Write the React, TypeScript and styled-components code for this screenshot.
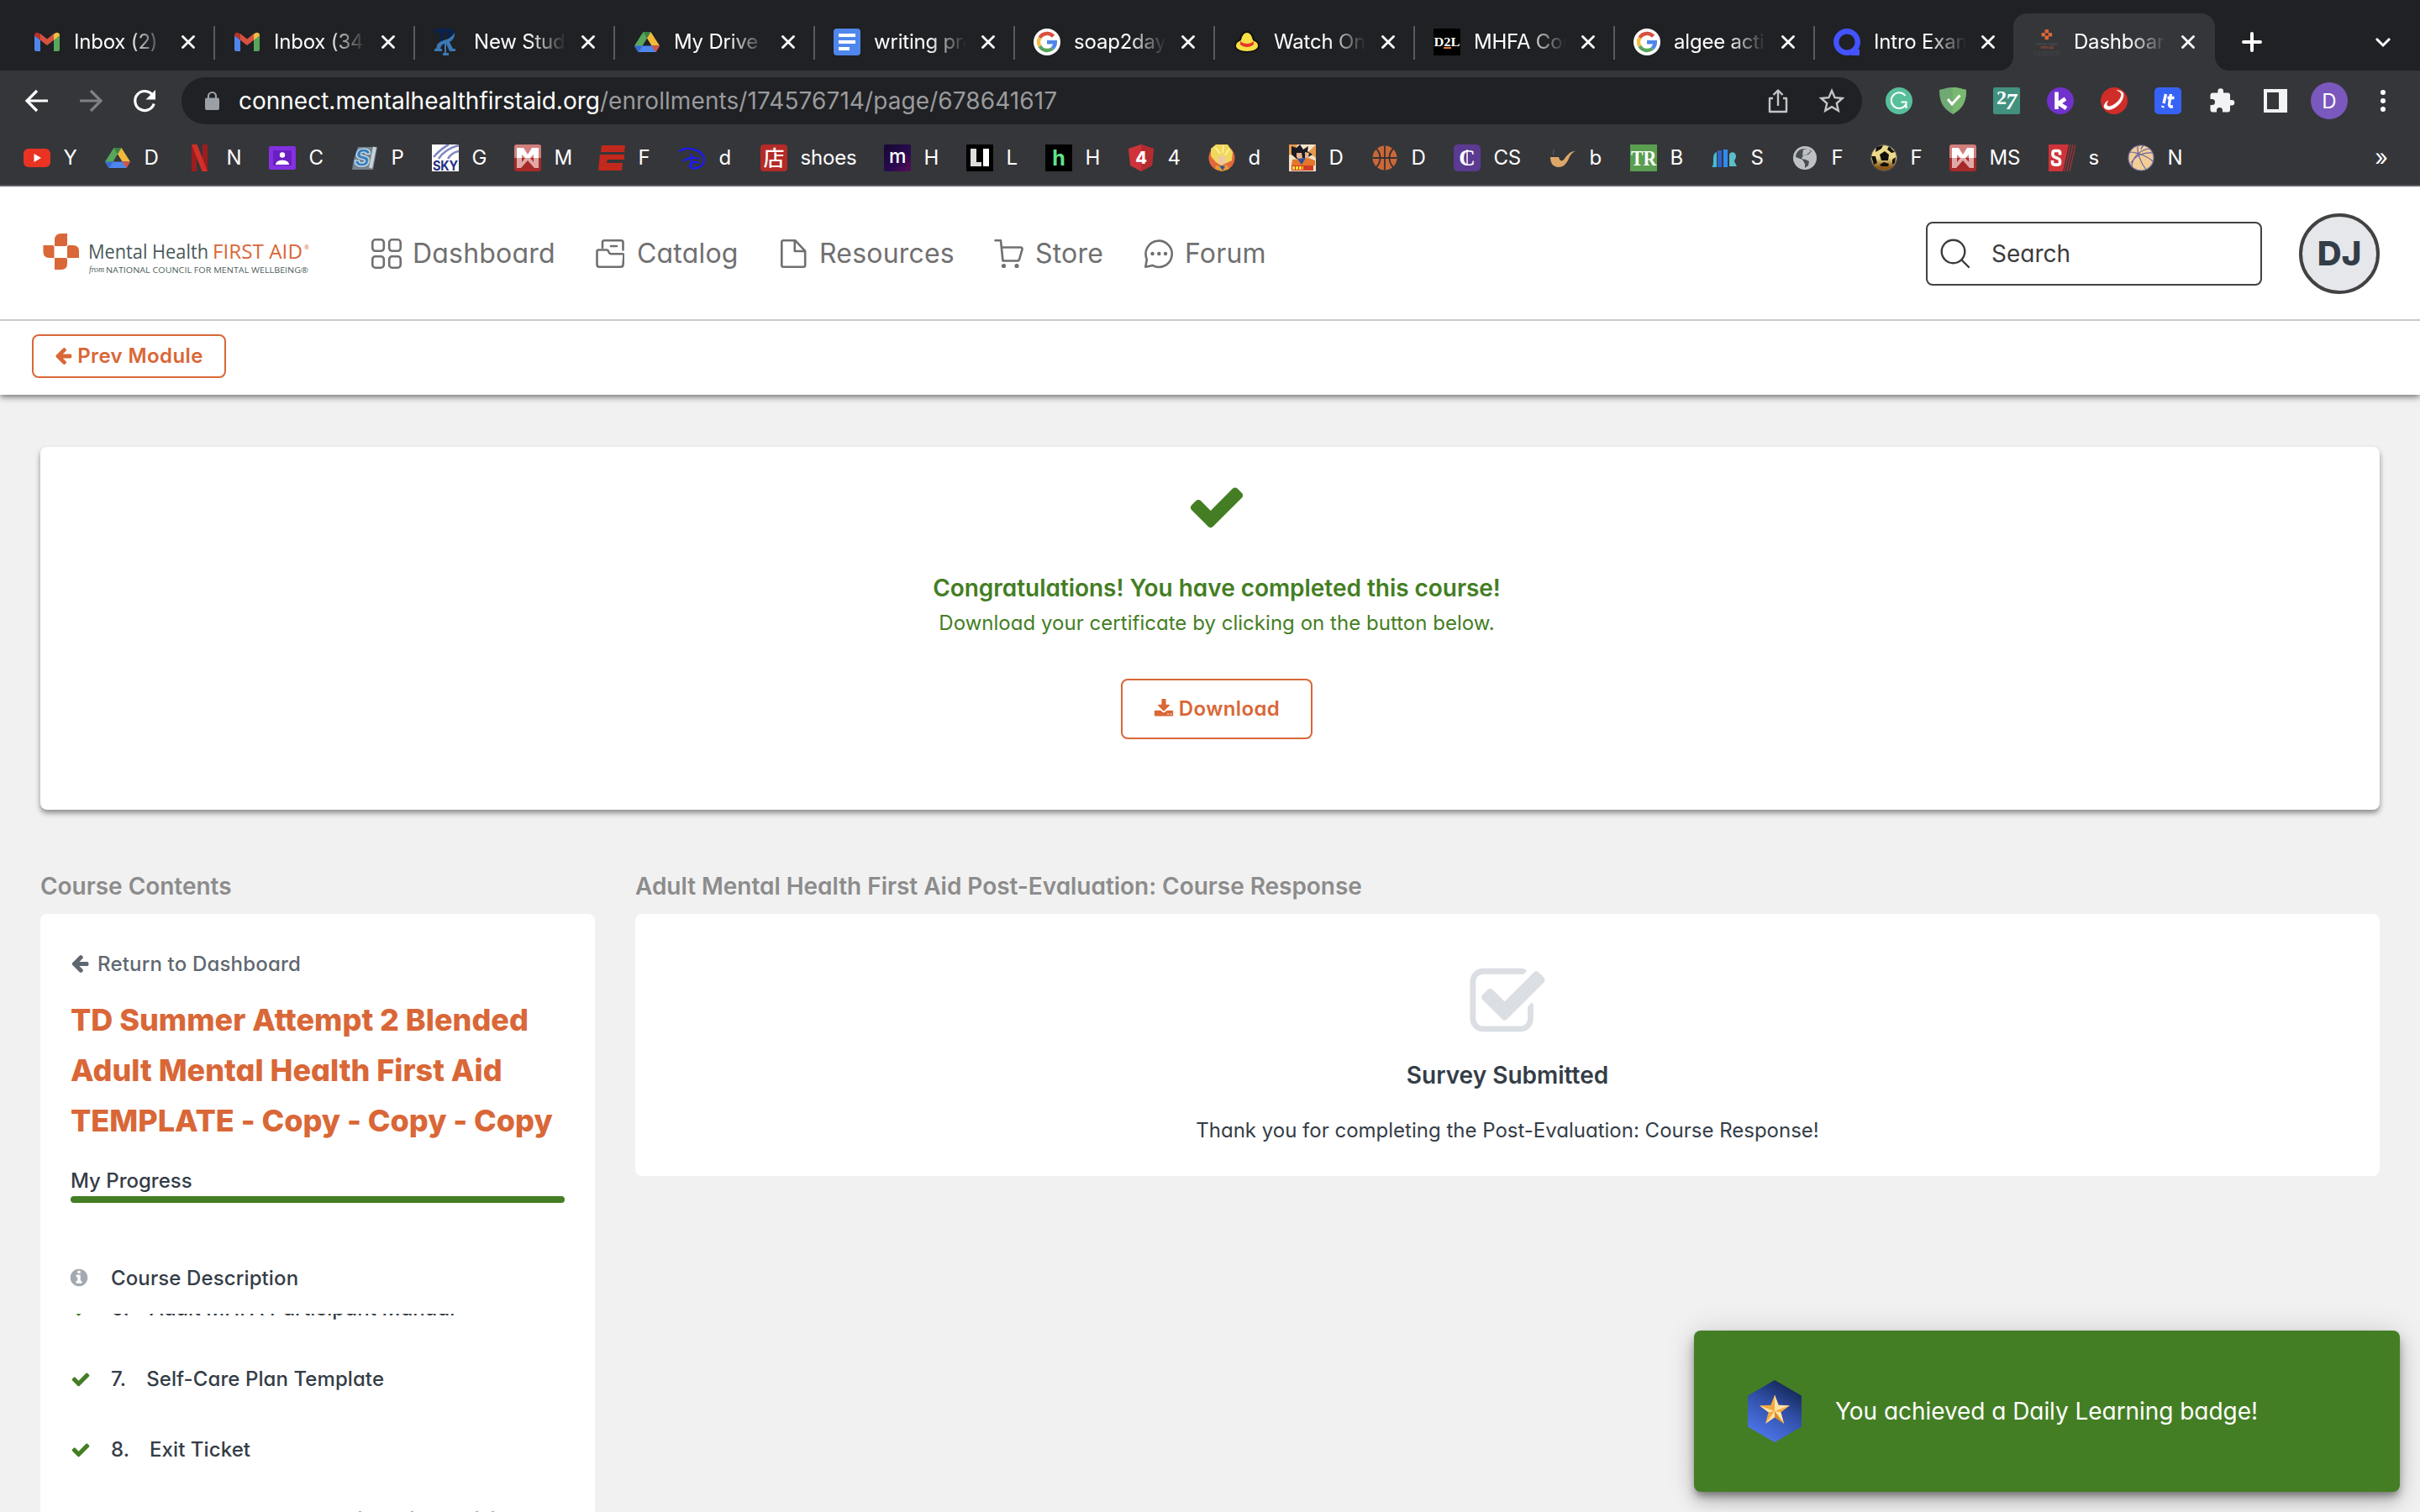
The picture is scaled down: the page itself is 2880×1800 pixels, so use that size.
import React from "react";
import styled, { createGlobalStyle, css } from "styled-components";

const ORANGE = "#d96737";
const GREEN = "#447e24";
const INK = "#343d47";

const GlobalStyle = createGlobalStyle`
  * { box-sizing: border-box; }
  html, body { margin: 0; padding: 0; }
  body {
    background: #f1f1f1;
    overflow: hidden;
    font-family: Inter, "Liberation Sans", sans-serif;
    font-feature-settings: "cv11";
  }
  svg { display: block; flex: none; }
`;

const Window = styled.div`
  position: relative;
  width: 2880px;
  height: 1800px;
  overflow: hidden;
  display: flex;
  flex-direction: column;
`;

/* ---------- browser chrome ---------- */

const Chrome = styled.div`
  flex: none;
  height: 222px;
  background: #35363a;
  border-bottom: 2px solid #5f5f65;
  color: #fff;
  font-feature-settings: normal;
`;

const TabStrip = styled.div`
  height: 84px;
  padding: 16px 0 0 18px;
  background: #202124;
  display: flex;
`;

const TabItem = styled.div<{ $active?: boolean; $line?: boolean }>`
  position: relative;
  width: 238px;
  height: 68px;
  padding-left: 22px;
  display: flex;
  align-items: center;
  flex: none;
  ${(p) =>
    p.$line &&
    css`
      &::after {
        content: "";
        position: absolute;
        right: 0;
        top: 15px;
        width: 2px;
        height: 40px;
        background: #5a5b5f;
      }
    `}
  ${(p) =>
    p.$active &&
    css`
      width: 240px;
      margin-left: -2px;
      padding-left: 24px;
      background: #35363a;
      border-radius: 16px 16px 0 0;
      &::before,
      &::after {
        content: "";
        position: absolute;
        bottom: 0;
        width: 16px;
        height: 16px;
      }
      &::before {
        left: -16px;
        background: radial-gradient(circle at 0 0, #202124 15.5px, #35363a 16px);
      }
      &::after {
        right: -16px;
        background: radial-gradient(circle at 100% 0, #202124 15.5px, #35363a 16px);
      }
    `}
`;

const TabTitle = styled.span`
  width: 112px;
  margin-left: 16px;
  font-size: 24px;
  line-height: 34px;
  letter-spacing: -0.2px;
  white-space: nowrap;
  overflow: hidden;
  color: #fff;
  mask-image: linear-gradient(90deg, #000 58%, transparent 98%);
`;

const TabClose = styled.svg`
  margin-left: 16px;
`;

const StripTools = styled.div`
  flex: 1;
  display: flex;
  align-items: center;
  justify-content: space-between;
  padding: 0 32px 0 32px;
`;

const Toolbar = styled.div`
  height: 72px;
  display: flex;
  align-items: center;
  padding: 0 28px;
`;

const NavButtons = styled.div`
  display: flex;
  gap: 32px;
  width: 188px;
`;

const Omnibox = styled.div`
  width: 2000px;
  height: 56px;
  border-radius: 28px;
  background: #202124;
  display: flex;
  align-items: center;
  padding: 0 20px 0 28px;
`;

const Url = styled.div`
  flex: 1;
  margin-left: 23px;
  font-size: 28px;
  letter-spacing: 0.08px;
  color: #9a9b9e;
  white-space: nowrap;
  b {
    font-weight: 400;
    letter-spacing: 0;
    color: #fff;
  }
`;

const OmniActions = styled.div`
  display: flex;
  gap: 32px;
`;

const Extensions = styled.div`
  display: flex;
  align-items: center;
  gap: 32px;
  margin-left: 28px;
`;

const ProfileDot = styled.div`
  width: 44px;
  height: 44px;
  margin: 0 -6px;
  border-radius: 50%;
  background: #7a58bd;
  display: grid;
  place-items: center;
  font-size: 24px;
`;

const BookmarkBar = styled.div`
  height: 64px;
  padding: 0 38px 0 28px;
  display: flex;
  align-items: center;
`;

const Bookmark = styled.div<{ $w: number }>`
  width: ${(p) => p.$w}px;
  display: flex;
  align-items: center;
  gap: 15.5px;
  font-size: 24px;
  line-height: 32px;
  letter-spacing: -0.2px;
  flex: none;
`;

const Overflow = styled.span`
  margin-left: auto;
  font-size: 27px;
  line-height: 32px;
`;

/* ---------- site header ---------- */

const SiteHeader = styled.header`
  flex: none;
  height: 160px;
  background: #fff;
  border-bottom: 2px solid #cacaca;
  display: flex;
  align-items: center;
  padding: 2px 48px 0 50px;
`;

const SiteNav = styled.nav`
  margin-left: 70px;
  flex: 1;
  display: flex;
  align-items: center;
`;

const NavLink = styled.a<{ $w: number; $gap: number }>`
  width: ${(p) => p.$w}px;
  display: flex;
  align-items: center;
  gap: ${(p) => p.$gap}px;
  font-size: 32px;
  line-height: 40px;
  letter-spacing: 0.2px;
  color: #707070;
  white-space: nowrap;
`;

const SearchBox = styled.div`
  width: 400px;
  height: 76px;
  border: 2px solid #424242;
  border-radius: 8px;
  display: flex;
  align-items: center;
  gap: 25px;
  padding-left: 15px;
  font-size: 28px;
  color: #3c3c3c;
`;

const Avatar = styled.div`
  width: 96px;
  height: 96px;
  margin-left: 44px;
  border-radius: 50%;
  border: 4px solid #424242;
  background: #e5e7eb;
  color: ${INK};
  display: grid;
  place-items: center;
  padding-bottom: 2px;
  font-size: 40px;
  font-weight: 800;
`;

const ModuleBar = styled.div`
  flex: none;
  position: relative;
  height: 88px;
  background: #fff;
  padding: 16px 38px;
  box-shadow: 0 2px 8px rgba(0, 0, 0, 0.6);
  clip-path: inset(0 0 -20px 0);
`;

const OutlineButton = styled.button<{ $w: number; $h: number }>`
  width: ${(p) => p.$w}px;
  height: ${(p) => p.$h}px;
  padding: 0;
  border: 2px solid ${ORANGE};
  border-radius: 8px;
  background: #fff;
  color: ${ORANGE};
  display: flex;
  align-items: center;
  justify-content: center;
  gap: 6px;
  font: 600 24px/30px Inter, "Liberation Sans", sans-serif;
  letter-spacing: 0.4px;
  font-feature-settings: "cv11";
`;

/* ---------- page body ---------- */

const Page = styled.main`
  padding: 62px 48px 0;
`;

const CongratsCard = styled.section`
  height: 432px;
  background: #fff;
  border-radius: 8px;
  box-shadow: 0 4px 6px rgba(0, 0, 0, 0.42);
  padding: 35px 0 0 16px;
  display: flex;
  flex-direction: column;
  align-items: center;
  color: ${GREEN};
`;

const CongratsTitle = styled.h2`
  margin: 41px 0 0;
  font-size: 28px;
  line-height: 40px;
  font-weight: 600;
  letter-spacing: -0.04px;
`;

const CongratsText = styled.p`
  margin: 1px 0 45px;
  font-size: 24px;
  line-height: 42px;
  letter-spacing: 0.03px;
`;

const Columns = styled.div`
  display: grid;
  grid-template-columns: 660px 1fr;
  column-gap: 48px;
  margin-top: 71px;
`;

const ColumnTitle = styled.h3`
  margin: 0 0 13px;
  height: 40px;
  font-size: 28px;
  line-height: 40px;
  font-weight: 600;
  letter-spacing: -0.04px;
  color: #8c8c8c;
  white-space: nowrap;
`;

const Contents = styled.section`
  position: relative;
  height: 712px;
  background: #fff;
  border-radius: 8px 8px 0 0;
  padding: 40px 36px 0;
  overflow: hidden;
`;

const ReturnLink = styled.a`
  display: flex;
  align-items: center;
  gap: 10px;
  font-size: 24px;
  line-height: 40px;
  font-weight: 500;
  letter-spacing: 0.18px;
  color: #5f6871;
`;

const CourseTitle = styled.h1`
  margin: 16px 0 0;
  font-size: 36px;
  line-height: 60px;
  font-weight: 800;
  letter-spacing: -0.01px;
  color: ${ORANGE};
  white-space: nowrap;
`;

const ProgressLabel = styled.div`
  margin-top: 22px;
  font-size: 24px;
  line-height: 40px;
  font-weight: 500;
  color: ${INK};
`;

const ProgressBar = styled.div`
  height: 8px;
  margin-top: -2px;
  border-radius: 4px;
  background: ${GREEN};
`;

const Description = styled.div`
  display: flex;
  align-items: center;
  gap: 27px;
  height: 40px;
  margin: 69px 0 0 -1px;
  font-size: 24px;
  font-weight: 500;
  letter-spacing: 0.12px;
  color: ${INK};
`;

const ModuleList = styled.div`
  height: 236px;
  margin-top: 23px;
  overflow: hidden;
`;

const ModuleScroll = styled.div`
  margin-top: -48px;
`;

const ModuleRow = styled.div`
  height: 84px;
  display: flex;
  align-items: center;
  font-size: 24px;
  line-height: 30px;
  font-weight: 500;
  letter-spacing: 0.08px;
  color: ${INK};
  white-space: nowrap;
`;

const ModuleNumber = styled.span`
  margin: 0 24px;
`;

/* Ascender tips of the row that is scrolled below the fold. */
const FoldTips = styled.svg`
  position: absolute;
  left: 378px;
  bottom: 0;
`;

const SurveyCard = styled.section`
  height: 312px;
  background: #fff;
  border-radius: 8px;
  display: flex;
  flex-direction: column;
  align-items: center;
  padding-top: 58px;
  color: ${INK};
`;

const SurveyTitle = styled.h2`
  margin: 18px 0 0;
  font-size: 28px;
  line-height: 40px;
  font-weight: 600;
`;

const SurveyText = styled.p`
  margin: 26px 0 0;
  font-size: 24px;
  line-height: 40px;
`;

const Toast = styled.div`
  position: absolute;
  left: 2016px;
  top: 1584px;
  width: 840px;
  height: 192px;
  border-radius: 8px;
  background: ${GREEN};
  color: #fff;
  display: flex;
  align-items: center;
  padding-left: 64px;
  padding-bottom: 1px;
  gap: 40px;
  font-size: 28px;
  letter-spacing: -0.05px;
  box-shadow: 0 6px 10px -2px rgba(0, 0, 0, 0.4), 0 12px 20px rgba(0, 0, 0, 0.18),
    0 2px 36px rgba(0, 0, 0, 0.14);
`;

/* ---------- glyphs ---------- */

const AWESOME = {
  check:
    "M1671 566q0 40-28 68l-724 724-136 136q-28 28-68 28t-68-28l-136-136-362-362q-28-28-28-68t28-68l136-136q28-28 68-28t68 28l294 295 656-657q28-28 68-28t68 28l136 136q28 28 28 68z",
  checkSquare:
    "M1472 930v318q0 119-84.5 203.5t-203.5 84.5h-832q-119 0-203.5-84.5t-84.5-203.5v-832q0-119 84.5-203.5t203.5-84.5h832q63 0 117 25 15 7 18 23 3 17-9 29l-49 49q-10 10-23 10-3 0-9-2-23-6-45-6h-832q-66 0-113 47t-47 113v832q0 66 47 113t113 47h832q66 0 113-47t47-113v-254q0-13 9-22l64-64q10-10 23-10 6 0 12 3 20 8 20 29zm231-489l-814 814q-24 24-57 24t-57-24l-430-430q-24-24-24-57t24-57l110-110q24-24 57-24t57 24l263 263 647-647q24-24 57-24t57 24l110 110q24 24 24 57t-24 57z",
  arrowLeft:
    "M1664 896v128q0 53-32.5 90.5t-84.5 37.5h-704l293 294q38 36 38 90t-38 90l-75 76q-37 37-90 37-52 0-91-37l-651-652q-37-37-37-90 0-52 37-91l651-650q38-38 91-38 52 0 90 38l75 74q38 38 38 91t-38 91l-293 293h704q52 0 84.5 37.5t32.5 90.5z",
  download:
    "M1344 1344q0-26-19-45t-45-19-45 19-19 45 19 45 45 19 45-19 19-45zm256 0q0-26-19-45t-45-19-45 19-19 45 19 45 45 19 45-19 19-45zm128-224v320q0 40-28 68t-68 28h-1472q-40 0-68-28t-28-68v-320q0-40 28-68t68-28h465l135 136q58 56 136 56t136-56l136-136h464q40 0 68 28t28 68zm-325-569q17 41-14 70l-448 448q-18 19-45 19t-45-19l-448-448q-31-29-14-70 17-39 59-39h256v-448q0-26 19-45t45-19h256q26 0 45 19t19 45v448h256q42 0 59 39z",
  info:
    "M1152 1376v-160q0-14-9-23t-23-9h-96v-512q0-14-9-23t-23-9h-320q-14 0-23 9t-9 23v160q0 14 9 23t23 9h96v320h-96q-14 0-23 9t-9 23v160q0 14 9 23t23 9h448q14 0 23-9t9-23zm-128-896v-160q0-14-9-23t-23-9h-192q-14 0-23 9t-9 23v160q0 14 9 23t23 9h192q14 0 23-9t9-23zm640 416q0 209-103 385.5t-279.5 279.5-385.5 103-385.5-103-279.5-279.5-103-385.5 103-385.5 279.5-279.5 385.5-103 385.5 103 279.5 279.5 103 385.5z",
};

function Awesome({ name, size, box, color = "currentColor" }: { name: keyof typeof AWESOME; size: [number, number]; box: string; color?: string }) {
  return (
    <svg width={size[0]} height={size[1]} viewBox={box} fill={color}>
      <path d={AWESOME[name]} />
    </svg>
  );
}

const SmallCheck = () => <Awesome name="check" size={[24, 24]} box="0 0 1792 1792" color={GREEN} />;

function Ico({ children, size = 32 }: { children: React.ReactNode; size?: number }) {
  return (
    <svg width={size} height={size} viewBox="0 0 32 32" fill="none">
      {children}
    </svg>
  );
}

const Txt = ({ x = 16, y, s, f, w = 700, fam = "Inter, sans-serif", len, children, ...r }: any) => (
  <text x={x} y={y} fontSize={s} fill={f} fontWeight={w} fontFamily={fam} textAnchor="middle" textLength={len} lengthAdjust="spacingAndGlyphs" {...r}>
    {children}
  </text>
);

const Gmail = () => (
  <Ico>
    <path d="M1 27V8l7 5.5V27H3a2 2 0 0 1-2-2z" fill="#4f86ec" />
    <path d="M31 25a2 2 0 0 1-2 2h-5V13.5L31 8z" fill="#58a55c" />
    <path d="M8 13.8V6l8 6.5L24 6v7.8l-8 6.2z" fill="#d95140" />
    <path d="M1 8c0-3.200 3.200-4 5-2.800L8 6.500v7.300L1 8.500z" fill="#b3332a" />
    <path d="M31 8c0-3.200-3.200-4-5-2.800L24 6.500v7.300l7-5.300z" fill="#f2bd42" />
  </Ico>
);
const Drive = () => (
  <Ico>
    <path d="M11.500 4h9L10 21.500 5.500 28 1 20.500z" fill="#58a55c" />
    <path d="M11.500 4L16 11.500 20.500 4z" fill="#36843f" />
    <path d="M20.500 4L31 20.500h-9.500L16 11.500z" fill="#f2b93b" />
    <path d="M10.500 20.500H31L26.500 28h-21z" fill="#4f86ec" />
    <path d="M21.500 20.500H31L26.500 28z" fill="#d95140" />
    <path d="M10.500 20.500H1L5.500 28z" fill="#3569d6" />
  </Ico>
);
const Docs = () => (
  <Ico>
    <rect width="32" height="32" rx="4" fill="#4f86ec" />
    <path d="M6 8h20M6 16h20M6 24h13" stroke="#fff" strokeWidth="4" />
  </Ico>
);
const Google = () => (
  <Ico>
    <circle cx="16" cy="16" r="16" fill="#fff" />
    <g fill="none" strokeWidth="4.400">
      <path d="M23.500 9.200A10 10 0 0 0 7.400 11" stroke="#d95140" />
      <path d="M7.400 11a10 10 0 0 0 0 10" stroke="#f2bd42" />
      <path d="M7.400 21a10 10 0 0 0 15.200 2.600" stroke="#58a55c" />
      <path d="M22.600 23.600A10 10 0 0 0 25.800 16.200H16" stroke="#4f86ec" />
    </g>
  </Ico>
);
const Rams = () => (
  <Ico>
    <path d="M1 0h19q5 1 5 6-1 5-6 7h-3V5h-4v14H7V5H1z" fill="#0b2149" />
    <path d="M25 5q1 7-6 11l4 8h3v3h-7l-4-9v11h3v3h-7v-3h2V18q-4 1-5 6h2v3H1v-3h2q1-8 9-10 9-2 13-9z" fill="#3b79b5" />
  </Ico>
);
const Hat = () => (
  <Ico>
    <path d="M16 3c5 0 8 4 9 10 4 2 6 4 6 8 0 4-7 8-15 8S1 25 1 21c0-4 2-6 6-8 1-6 4-10 9-10z" fill="#111" />
    <path d="M16 5c4 0 6 4 7 9 4 2 6 3 6 7 0 3-6 6-13 6S3 24 3 21c0-4 2-5 6-7 1-5 3-9 7-9z" fill="#f7df46" />
    <path d="M8 15c4 4 12 4 16 0v4c-4 4-12 4-16 0z" fill="#e8372c" />
  </Ico>
);
const D2L = () => (
  <Ico>
    <rect width="32" height="32" fill="#000" />
    <Txt y="21" s="15" f="#fff" fam="Liberation Serif, serif" w={700} len="31">D2L</Txt>
    <path d="M12 23h9" stroke="#e07b39" strokeWidth="2" />
  </Ico>
);
const QIcon = () => (
  <Ico>
    <circle cx="16" cy="16" r="12.800" stroke="#4353ff" strokeWidth="6.400" />
    <path d="M20 25h11v7H21z" fill="#4353ff" />
  </Ico>
);
const MhfaFav = () => (
  <Ico>
    <g fill="#d96737">
      <rect x="13.500" y="1" width="4.600" height="4.600" rx="1" />
      <rect x="9.500" y="5" width="4.600" height="4.600" rx="1" />
      <rect x="17.600" y="5" width="4.600" height="4.600" rx="1" />
      <rect x="13.500" y="8.600" width="4.600" height="4.600" rx="1" />
    </g>
    <Txt y="19.500" s="4" f="#55575b" w={400} len="25">Mental Health</Txt>
    <Txt y="24" s="3.500" f="#a24c2d" len="15">FIRST AID</Txt>
    <path d="M0 28h32M0 31h32" stroke="#47484c" strokeWidth="1.200" strokeDasharray="2 1" />
  </Ico>
);

const tabs = [
  { title: "Inbox (2) - d", icon: <Gmail /> },
  { title: "Inbox (348", icon: <Gmail /> },
  { title: "New Stude", icon: <Rams /> },
  { title: "My Drive -", icon: <Drive /> },
  { title: "writing pro", icon: <Docs /> },
  { title: "soap2day", icon: <Google /> },
  { title: "Watch On", icon: <Hat /> },
  { title: "MHFA Con", icon: <D2L /> },
  { title: "algee actio", icon: <Google /> },
  { title: "Intro Exam", icon: <QIcon /> },
  { title: "Dashboard", icon: <MhfaFav /> },
];

const Sq = ({ c, r = 0, children }: { c: string; r?: number; children?: React.ReactNode }) => (
  <Ico>
    <rect width="32" height="32" rx={r} fill={c} />
    {children}
  </Ico>
);

const MaxM = () => (
  <Ico>
    <rect width="32" height="32" rx="3" fill="#a82a28" />
    <path d="M0 16V3q0-3 3-3h26q3 0 3 3v13z" fill="#d17f7d" />
    <path d="M3 16V4h8l5 8 5-8h8v12h-6v-4l-4 4h-6l-4-4v4z" fill="#fff" />
    <path d="M3 16h6v5l4-5h6l4 5v-5h6v12h-5l-8-9-8 9H3z" fill="#e0a9a8" />
  </Ico>
);

const bookmarks: { label: string; w: number; icon: React.ReactNode }[] = [
  { label: "Y", w: 96, icon: <Ico><rect y="5" width="32" height="22" rx="6" fill="#ea3323" /><path d="M12.500 11l8.500 5-8.500 5z" fill="#fff" /></Ico> },
  { label: "D", w: 98, icon: <Drive /> },
  { label: "N", w: 98, icon: <Ico><path d="M6 0h6v32H6zM19 0h6v32h-6z" fill="#9b1d1d" /><path d="M6 0h6.500L25 32h-6.500z" fill="#d32f27" /></Ico> },
  { label: "C", w: 98, icon: <Ico><rect y="2" width="32" height="28" rx="2" fill="#8430e0" /><rect x="5" y="7" width="22" height="18" fill="#6a1fc0" /><circle cx="16" cy="12.500" r="3.200" fill="#fff" /><path d="M8 24c0-7 16-7 16 0z" fill="#fff" /></Ico> },
  { label: "P", w: 96, icon: <Ico><path d="M8 3h23l-5 27H1l2-12z" fill="#76828c" /><Txt x={13} y="26" s="28" f="#3c7fbb" w={800} stroke="#cfe5f5" strokeWidth="1.200" fontStyle="italic">S</Txt><path d="M28 3l-5 25" stroke="#c5d3dd" strokeWidth="4" /></Ico> },
  { label: "G", w: 98, icon: <Sq c="#fff"><path d="M2 15C7 9 13 4 20 0M8 17C13 9 21 4 32 1M19 17c3-5 7-8 13-9" stroke="#8187c4" strokeWidth="2.600" /><Txt y="31" s="16" f="#252f80" len="30">SKY</Txt></Sq> },
  { label: "M", w: 100, icon: <MaxM /> },
  { label: "F", w: 96, icon: <Ico><path d="M4 1h28l-1 8H3zM2 12h29v6H11l-1 4h19l-1 9H0z" fill="#c3281c" /></Ico> },
  { label: "d", w: 97, icon: <Ico><path d="M1 9C4 1 30 5 30 18c0 10-13 12-16 9-3-4 3-8 10-5M15 11v18M5 20c5-4 12-5 19-3" stroke="#1b1bec" strokeWidth="2.400" /></Ico> },
  { label: "shoes", w: 147, icon: <Sq c="#b52b27" r={4}><Txt y="25" s="25" f="#fff" w={500} fam="Noto Sans CJK JP, sans-serif">店</Txt></Sq> },
  { label: "H", w: 98, icon: <Ico><defs><linearGradient id="mg" x1="0" y1="0" x2="1" y2="1"><stop offset="0" stopColor="#15082e" /><stop offset=".6" stopColor="#2a0a52" /><stop offset="1" stopColor="#5b0d55" /></linearGradient></defs><rect width="32" height="32" rx="2" fill="url(#mg)" /><Txt y="22" s="23" f="#fff" w={500}>m</Txt></Ico> },
  { label: "L", w: 94, icon: <Sq c="#000"><path d="M5 5h7v16h6v5H5z" fill="#ddd" /><path d="M20 5h7v21h-7z" fill="#fff" /></Sq> },
  { label: "H", w: 98, icon: <Sq c="#000"><Txt y="25" s="25" f="#5fe38c">h</Txt></Sq> },
  { label: "4", w: 96, icon: <Ico><path d="M16 0l15 5-2 20-13 7L3 25 1 5z" fill="#cf3339" /><path d="M16 0l15 5-2 20-13 7z" fill="#b42b31" /><Txt y="23" s="20" f="#fff" w={800}>4</Txt></Ico> },
  { label: "d", w: 96, icon: <Ico><circle cx="16" cy="16" r="15.500" fill="#e2683b" /><path d="M3 5l6-5h14l6 9-1 10-6 3-7 3-6-4-6-7z" fill="#f0d85a" /><path d="M12 13l8 1 1 7-5 4-5-5z" fill="#f1c7a0" /><path d="M9 25l6 1 7-2 3 5-9 3-8-3z" fill="#e39a35" /><path d="M13 25l4 6 3-5z" fill="#31539c" /><path d="M8 3l6 8M18 1l-1 9M25 5l-5 8" stroke="#fff3a8" strokeWidth="1.600" /></Ico> },
  { label: "D", w: 98, icon: <Sq c="#f3e2c8"><path d="M0 0h10l-3 9-7 4zM32 0v16l-9-7z" fill="#e79a4b" /><path d="M3 2l6 2 4-4 4 6 6-4-1 6 6 4-7 4-12 1-6-5z" fill="#1b1b22" /><path d="M9 10h6l1 6-4 2-3-3zM19 9l5 1-1 6-4 1z" fill="#e6b38e" /><path d="M4 18l9-1 10-1 8 3v6H3z" fill="#e5762c" /><path d="M10 17l5 7 5-8z" fill="#2c4f9c" /><rect x="3" y="25" width="26" height="6" fill="#d33a24" /><path d="M4 28h13" stroke="#f4df3c" strokeWidth="4" strokeDasharray="3 1" /></Sq> },
  { label: "D", w: 98, icon: <Ico><circle cx="16" cy="16" r="14.500" fill="#c8683a" /><path d="M16 1.500v29M1.500 16h29M6 5c6 6 6 16 0 22M26 5c-6 6-6 16 0 22" stroke="#38302e" strokeWidth="1.800" /></Ico> },
  { label: "CS", w: 114, icon: <Sq c="#5b3a91" r={5}><Txt y="25" s="27" f="#fff" fam="Liberation Serif, serif">C</Txt><path d="M16 6v19" stroke="#fff" strokeWidth="1.500" /></Sq> },
  { label: "b", w: 96, icon: <Ico><path d="M1 15h10c1 4 3 6 6 3C21 13 24 8 31 8c-5 2-7 6-9 11-3 5-6 8-11 8-7 0-10-5-10-12z" fill="#dda76a" /><path d="M5 12c-2-2 1-4 0-6" stroke="#50555f" strokeWidth="1.500" /></Ico> },
  { label: "B", w: 96, icon: <Sq c="#5a9e50"><Txt y="25" s="25" f="#fff" fam="Liberation Serif, serif" len="30">TR</Txt></Sq> },
  { label: "S", w: 96, icon: <Ico><path d="M1 27c2-1 2-5 2-9 0-5 1-8 4-9v18z" fill="#45bcd0" /><path d="M8 7h5v20H8z" fill="#2f62c9" /><path d="M15 6h5v21h-5z" fill="#2f8cf0" /><path d="M22 12c1-4 8-4 8 2 0 3-2 4-2 6l3 6h-9z" fill="#5bbccb" /></Ico> },
  { label: "F", w: 94, icon: <Ico><circle cx="16" cy="16" r="14" fill="#bdc1c6" /><path d="M15 5c5 0 7 1 9 3l-4 4-6 1-2 4 5 1 4 2-1 5-4 3v-5l-3-5-8-3C5 9 10 5 15 5z" fill="#4a4c50" /><path d="M14 6l6-1 3 3-5 4-5 1z" fill="#bdc1c6" /></Ico> },
  { label: "F", w: 94, icon: <Ico><defs><linearGradient id="ball" x1="0" y1="0" x2="0" y2="1"><stop offset=".5" stopColor="#ecd98b" /><stop offset=".85" stopColor="#8a5a18" /></linearGradient></defs><circle cx="16" cy="16" r="15.500" fill="url(#ball)" stroke="#55564f" strokeWidth="1" /><path d="M11 12l6-4 5 4-1 7h-8zM7 3l8-2-2 4-7 4zM22 2l7 7-4 1-5-4zM1 14l5 0 2 8-4 2zM30 15l-4 3 0 6 3-2zM11 24l5-3 6 2-1 3h-8z" fill="#12100c" /></Ico> },
  { label: "MS", w: 118, icon: <MaxM /> },
  { label: "s", w: 94, icon: <Ico><path d="M0 0h24l-7 32H0z" fill="#cf3338" /><path d="M26 0l-7 32M29 0l-7 32M32 0l-7 32" stroke="#a93334" strokeWidth="1.200" /><path d="M13.500 12.500V9.500q0-2-2.500-2H7.500q-2.500 0-2.500 2.500v2q0 2 2 2.800l4 1.800q2.500 1 2.500 3v2q0 2.500-2.500 2.500H7q-2.500 0-2.500-2.500V19" stroke="#fff" strokeWidth="3.600" /></Ico> },
  { label: "N", w: 98, icon: <Ico><circle cx="16" cy="16" r="15" fill="#f2cd98" stroke="#7a78a8" strokeWidth="1.200" /><path d="M2 9c9 0 22 5 28 11M12 1c-1 8 3 20 10 29M26 5C16 6 6 14 5 26M4 22c5-8 14-13 26-12M19 1c-2 2-3 3-3 5" stroke="#6764a0" strokeWidth="1.200" /></Ico> },
];

const MhfaLogo = () => (
  <svg width="322" height="60" viewBox="0 -4 322 60">
    <g fill={ORANGE}>
      <path d="M15 17V10q0-8 8-8h7v13q0 2-2 2z" />
      <path d="M1.500 16h11q2 0 2 2v13H8.500q-7 0-7-7z" />
      <path d="M30 18q0-2 2-2h5q7 0 7 7v8H30z" />
      <path d="M15 31h13q2 0 2 2v5q0 7-7 7h-8z" />
    </g>
    <g fontFamily="'Open Sans', 'Noto Sans', sans-serif">
      <text x="55" y="32" fontSize="24" fill="#4a5a5b" fontWeight="500" textLength="143" lengthAdjust="spacingAndGlyphs">Mental Health</text>
      <text x="203" y="32" fontSize="23.500" fill={ORANGE} fontWeight="500" textLength="107" lengthAdjust="spacingAndGlyphs">FIRST AID</text>
      <text x="312" y="21" fontSize="7" fill={ORANGE}>®</text>
      <text x="56" y="48" fontSize="11" fill="#4f5f60" fontStyle="italic" fontFamily="'Liberation Serif', serif" fontWeight="400" textLength="18" lengthAdjust="spacingAndGlyphs">from</text>
      <text x="76" y="48.500" fontSize="9" fill="#4f5f60" fontWeight="400" textLength="241" lengthAdjust="spacingAndGlyphs">NATIONAL COUNCIL FOR MENTAL WELLBEING®</text>
    </g>
  </svg>
);

const Line = ({ w = 36, vb = "0 0 36 36", sw = 2.6, children }: any) => (
  <svg width={w} height="36" viewBox={vb} fill="none" stroke="currentColor" strokeWidth={sw} strokeLinejoin="round" strokeLinecap="round">
    {children}
  </svg>
);

export default function App() {
  return (
    <Window>
      <GlobalStyle />
      <Chrome>
        <TabStrip>
          {tabs.map((t, i) => (
            <TabItem key={i} $active={i === 10} $line={i < 9}>
              {t.icon}
              <TabTitle>{t.title}</TabTitle>
              <TabClose width="16" height="16" viewBox="0 0 16 16" stroke="#fff" strokeWidth="2.800" strokeLinecap="round">
                <path d="M1.500 1.500l13 13M14.500 1.500l-13 13" />
              </TabClose>
            </TabItem>
          ))}
          <StripTools>
            <svg width="24" height="24" viewBox="0 0 24 24" stroke="#fff" strokeWidth="4" strokeLinecap="round">
              <path d="M12 2v20M2 12h20" />
            </svg>
            <svg width="24" height="24" viewBox="0 0 24 24" fill="none" stroke="#fff" strokeWidth="3">
              <path d="M4 8l8 8 8-8" />
            </svg>
          </StripTools>
        </TabStrip>
        <Toolbar>
          <NavButtons>
            <Ico><path d="M29 16H4.500M16 4L4 16l12 12" stroke="#fff" strokeWidth="3.200" /></Ico>
            <Ico><path d="M3 16h24.500M16 4l12 12-12 12" stroke="#7f8083" strokeWidth="3.200" /></Ico>
            <Ico><path d="M25.500 9.200A11.500 11.500 0 1 0 27.200 19.500" stroke="#fff" strokeWidth="3.200" /><path d="M29 3v11.500H17.500z" fill="#fff" /></Ico>
          </NavButtons>
          <Omnibox>
            <svg width="17" height="24" viewBox="0 0 17 24">
              <path d="M4 10V6.500a4.500 4.500 0 0 1 9 0V10" fill="none" stroke="#9aa0a6" strokeWidth="2.200" />
              <rect x="0" y="8.500" width="17" height="14.500" rx="2" fill="#9aa0a6" />
            </svg>
            <Url>
              <b>connect.mentalhealthfirstaid.org</b>/enrollments/174576714/page/678641617
            </Url>
            <OmniActions>
              <Ico><path d="M10 13H6v16h20V13h-4M16 22V3.500M10.500 9L16 3.500 21.500 9" stroke="#c4c5c7" strokeWidth="2.400" strokeLinejoin="round" /></Ico>
              <Ico><path d="M16 4l3.600 8.200 9 .8-6.800 6 2 8.800L16 23.200 8.200 27.800l2-8.800-6.800-6 9-.8z" stroke="#c4c5c7" strokeWidth="2.400" /></Ico>
            </OmniActions>
          </Omnibox>
          <Extensions>
            <Ico><circle cx="16" cy="16" r="16" fill="#58bf9b" /><path d="M23.500 10A9.300 9.300 0 1 0 24 20.500M18.500 17.500H24.500V25" stroke="#fff" strokeWidth="2" /></Ico>
            <Ico><path d="M16 0c6 0 10 1.500 16 3 0 14-4 22-16 29C4 25 0 17 0 3c6-1.500 10-3 16-3z" fill="#6fa973" /><path d="M16 0c6 0 10 1.500 16 3 0 14-4 22-16 29z" fill="#79b870" /><path d="M10 14l5 6 9.500-10.500" stroke="#fff" strokeWidth="3" /></Ico>
            <Sq c="#42917f" r={2}><Txt x={10} y="20" s="24" f="#fff" fam="Liberation Serif, serif">2</Txt><Txt x={21.500} y="26" s="27" f="#fff" fam="Liberation Serif, serif" fontStyle="italic">7</Txt></Sq>
            <Ico><circle cx="16" cy="16" r="16" fill="#7131cc" /><path d="M11.500 5.500v20.500M22 13.500l-8 5.500 9 6" stroke="#fff" strokeWidth="4.600" /></Ico>
            <Ico><circle cx="16" cy="16" r="16" fill="#d12d28" /><path d="M19 3.500c5 0 9 2 8 7-1 7-9 15-16 16-6 .500-9-3-6-7 1-2 2-3 4-3.500-3 4-2 7 2 6.500C18 21 25 13 24.500 8c-.500-2.500-3-3.500-5.500-4.500z" fill="#fff" stroke="#fff" strokeWidth=".4" /></Ico>
            <Sq c="#3763f4" r={5}><path d="M13.500 8l-2.500 11M10.200 22l-.500 2M19.500 8l-2 12q-.500 3.500 4.500 3M15.500 12.500h8" stroke="#fff" strokeWidth="3.400" /></Sq>
            <Ico><path d="M28 15h-2V9a2.600 2.600 0 0 0-2.600-2.600H18V4.500a3.300 3.300 0 0 0-6.600 0v1.900H5A2.600 2.600 0 0 0 2.500 9v5h2a3.500 3.500 0 0 1 0 7h-2v6A2.600 2.600 0 0 0 5 29.500h5v-2a3.500 3.500 0 0 1 7 0v2h6.400A2.600 2.600 0 0 0 26 27v-5.500h2a3.200 3.200 0 0 0 0-6.500z" fill="#f1f3f4" /></Ico>
            <Ico><path d="M2 2h28v28H2zM6 6v20h14V6z" fill="#f1f3f4" fillRule="evenodd" /></Ico>
            <ProfileDot>D</ProfileDot>
            <Ico><circle cx="16" cy="6" r="3" fill="#fff" /><circle cx="16" cy="16" r="3" fill="#fff" /><circle cx="16" cy="26" r="3" fill="#fff" /></Ico>
          </Extensions>
        </Toolbar>
        <BookmarkBar>
          {bookmarks.map((b, i) => (
            <Bookmark key={i} $w={b.w}>
              {b.icon}
              {b.label}
            </Bookmark>
          ))}
          <Overflow>»</Overflow>
        </BookmarkBar>
      </Chrome>

      <SiteHeader>
        <MhfaLogo />
        <SiteNav>
          <NavLink $w={267} $gap={13}>
            <Line>
              <rect x="1.300" y="1.300" width="13.500" height="13.500" rx="3.500" />
              <rect x="21.200" y="1.300" width="13.500" height="13.500" rx="3.500" />
              <rect x="1.300" y="21.200" width="13.500" height="13.500" rx="3.500" />
              <rect x="21.200" y="21.200" width="13.500" height="13.500" rx="3.500" />
            </Line>
            Dashboard
          </NavLink>
          <NavLink $w={219} $gap={15}>
            <Line w={34} vb="0 0 34 36">
              <path d="M8 11V4.500Q8 2.300 10.200 2.300H30.300Q32.500 2.300 32.500 4.500V13.500M18 9h7" />
              <path d="M1.500 31V15.500q0-2 2-2H13q1.500 0 2 1.500l1 2q.500 1.200 2 1.200h13.500q2 0 2 2L32.500 31q0 2.700-2.700 2.700H4.200Q1.500 33.700 1.500 31z" />
            </Line>
            Catalog
          </NavLink>
          <NavLink $w={255} $gap={14}>
            <Line w={33} vb="0 0 33 36">
              <path d="M2.300 4.300q0-2 2-2h14.200L30.200 14.800V31.700q0 2-2 2H4.300q-2 0-2-2zM17.800 2.500V15H30" />
            </Line>
            Resources
          </NavLink>
          <NavLink $w={178} $gap={14}>
            <Line w={35} vb="0 0 35 36">
              <path d="M1.500 2.300H8L10.500 26.500H28Q29.500 26.500 30 25L33.500 12.800Q33.800 10.500 31.500 10.500H9" />
              <circle cx="11.500" cy="32.500" r="1.300" fill="currentColor" />
              <circle cx="27" cy="32.500" r="1.300" fill="currentColor" />
            </Line>
            Store
          </NavLink>
          <NavLink $w={160} $gap={13}>
            <Line>
              <path d="M2.300 33.700L3.800 24.500A15.600 15.600 0 1 1 10.500 31.900Q8 32.500 2.300 33.700Z" />
              <g fill="currentColor" strokeWidth="1.500">
                <circle cx="10.500" cy="18" r="1.500" />
                <circle cx="18.300" cy="18" r="1.500" />
                <circle cx="26" cy="18" r="1.500" />
              </g>
            </Line>
            Forum
          </NavLink>
        </SiteNav>
        <SearchBox>
          <Line sw={2.4}>
            <circle cx="15.500" cy="15.500" r="13.800" />
            <path d="M25.500 25.500L34 34" />
          </Line>
          Search
        </SearchBox>
        <Avatar>DJ</Avatar>
      </SiteHeader>

      <ModuleBar>
        <OutlineButton $w={231} $h={52}>
          <Awesome name="arrowLeft" size={[21, 23]} box="100 100 1600 1800" />
          Prev Module
        </OutlineButton>
      </ModuleBar>

      <Page>
        <CongratsCard>
          <Awesome name="check" size={[72, 72]} box="0 0 1792 1792" />
          <CongratsTitle>Congratulations! You have completed this course!</CongratsTitle>
          <CongratsText>Download your certificate by clicking on the button below.</CongratsText>
          <OutlineButton $w={228} $h={72}>
            <Awesome name="download" size={[24, 24]} box="0 0 1792 1792" />
            Download
          </OutlineButton>
        </CongratsCard>

        <Columns>
          <div>
            <ColumnTitle>Course Contents</ColumnTitle>
            <Contents>
              <ReturnLink>
                <Awesome name="arrowLeft" size={[22, 24]} box="64 100 1643 1792" />
                Return to Dashboard
              </ReturnLink>
              <CourseTitle>
                TD Summer Attempt 2 Blended
                <br />
                Adult Mental Health First Aid
                <br />
                TEMPLATE - Copy - Copy - Copy
              </CourseTitle>
              <ProgressLabel>My Progress</ProgressLabel>
              <ProgressBar />
              <Description>
                <Awesome name="info" size={[22, 24]} box="75 0 1643 1792" color="#a3a9b0" />
                Course Description
              </Description>
              <ModuleList>
                <ModuleScroll>
                  <ModuleRow><SmallCheck /><ModuleNumber>6.</ModuleNumber>Adult MHFA Participant Manual</ModuleRow>
                  <ModuleRow><SmallCheck /><ModuleNumber>7.</ModuleNumber>Self-Care Plan Template</ModuleRow>
                  <ModuleRow><SmallCheck /><ModuleNumber>8.</ModuleNumber>Exit Ticket</ModuleRow>
                </ModuleScroll>
              </ModuleList>
              <FoldTips width="166" height="1" fill="#a5aab0">
                <path d="M1 0h3v1H1zM63 0h3v1h-3zM140 0h3v1h-3zM159 0h3v1h-3z" />
              </FoldTips>
            </Contents>
          </div>
          <div>
            <ColumnTitle>Adult Mental Health First Aid Post-Evaluation: Course Response</ColumnTitle>
            <SurveyCard>
              <Awesome name="checkSquare" size={[96, 96]} box="0 0 1792 1792" color="#dbdfe4" />
              <SurveyTitle>Survey Submitted</SurveyTitle>
              <SurveyText>Thank you for completing the Post-Evaluation: Course Response!</SurveyText>
            </SurveyCard>
          </div>
        </Columns>
      </Page>

      <Toast>
        <svg width="64" height="74" viewBox="0 0 64 74">
          <defs>
            <linearGradient id="hex" x1=".8" y1="0" x2=".3" y2="1">
              <stop offset="0.100" stopColor="#172a5c" />
              <stop offset="0.450" stopColor="#2f4fa6" />
              <stop offset="1" stopColor="#5078ee" />
            </linearGradient>
          </defs>
          <path d="M32 0l32 18.500v37L32 74 0 55.500v-37z" fill="url(#hex)" />
          <path d="M32 17.500l4.600 12.200 13.400.6-10.600 8 3.600 13.500L32 44.300 21 51.800l3.600-13.500-10.600-8 13.400-.6z" fill="#f3a93f" />
          <path d="M32 17.500l4.600 12.200L32 37zM50 30.300L32 37l4.600-7.300zM14 30.300L32 37l-7.400 1.300zM21 51.800L32 37v7.300zM43 51.800L32 37l7.400 1.300z" fill="#fde3a8" />
          <path d="M32 37v7.300l11 7.500z" fill="#d98a2b" />
        </svg>
        You achieved a Daily Learning badge!
      </Toast>
    </Window>
  );
}
